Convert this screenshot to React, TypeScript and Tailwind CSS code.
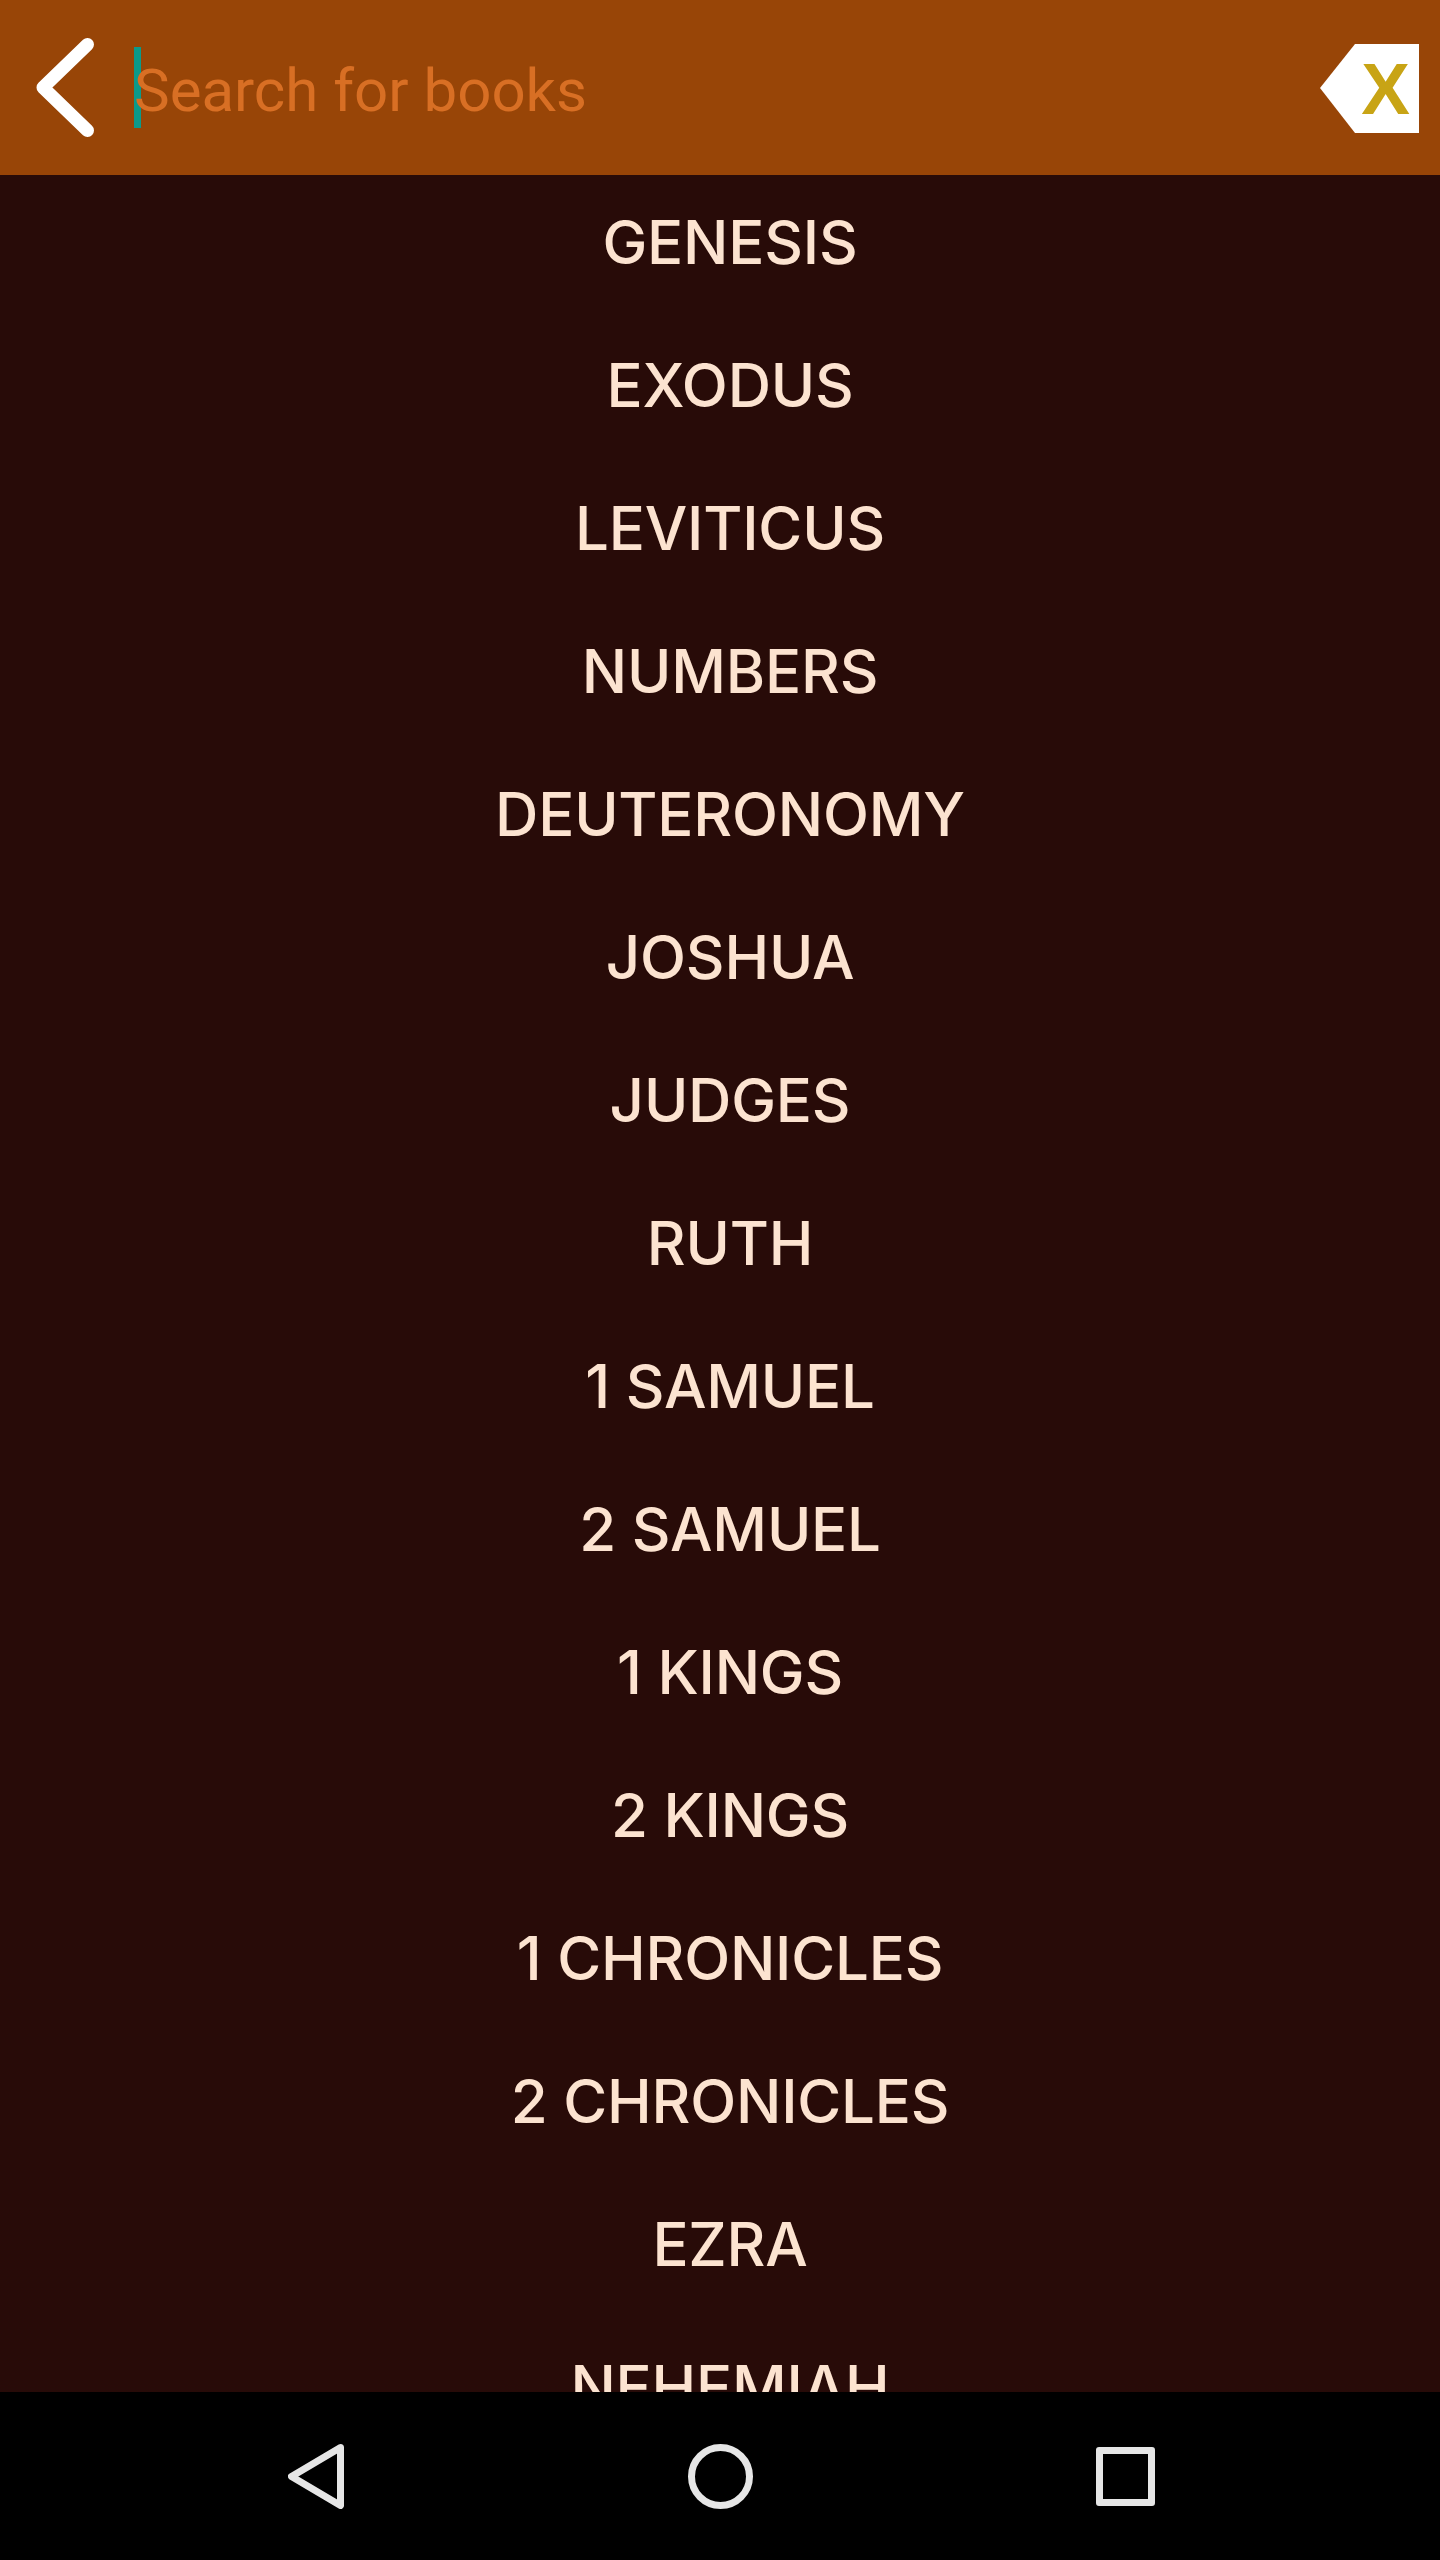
const books = ['GENESIS', 'EXODUS', 'LEVITICUS', 'NUMBERS', 'DEUTERONOMY', 'JOSHUA', 'JUDGES', 'RUTH', '1 SAMUEL', '2 SAMUEL', '1 KINGS', '2 KINGS', '1 CHRONICLES', '2 CHRONICLES', 'EZRA', 'NEHEMIAH'];

export default function App() {
  return (
    <div className="w-[1440px] h-[2560px] flex flex-col overflow-hidden bg-[#280b08]">
      {/* Search bar */}
      <div className="h-[175px] shrink-0 flex items-center bg-[#984507]">
        <svg className="ml-[36px] w-[58px] h-[99px] shrink-0" viewBox="0 0 58 99">
          <path d="M51.5 6.5 L7 49.5 L51.5 92.5" fill="none" stroke="#fff" strokeWidth="13" strokeLinecap="round" strokeLinejoin="round" />
        </svg>
        <div className="ml-[40px] w-[7px] h-[81px] bg-[#0b9a8a] shrink-0" />
        <span className="-ml-[7px] mt-[7px] text-[60px] leading-none text-[#d86f24] font-['Roboto',sans-serif]">Search for books</span>
        <div className="ml-auto mr-[21px] mt-[2px] relative w-[99px] h-[89px] flex items-center justify-end">
          <svg className="absolute inset-0 w-full h-full" viewBox="0 0 99 89">
            <polygon points="0,44 35,0 99,0 99,89 35,89" fill="#fff" />
          </svg>
          <span className="relative mr-[9px] text-[73px] leading-none font-bold text-[#c8a415] font-['Liberation_Sans',sans-serif]">X</span>
        </div>
      </div>
      {/* Book list */}
      <div className="flex-1 min-h-0 overflow-hidden pl-[20px]">
        {books.map((b) => (
          <div key={b} className="h-[143px] pb-[9px] flex items-center justify-center text-[60px] leading-none font-medium tracking-[-0.2px] text-[#fce3d0] font-['Inter',sans-serif]">
            {b}
          </div>
        ))}
      </div>
      {/* Android nav bar */}
      <div className="h-[168px] shrink-0 bg-black flex items-center">
        <svg className="ml-[288px] w-[56px] h-[65px]" viewBox="0 0 56 65">
          <path d="M52.5 3.5 L3.5 32.5 L52.5 61.5 Z" fill="none" stroke="#e6e6e6" strokeWidth="7" strokeLinejoin="round" />
        </svg>
        <div className="ml-[344px] w-[65px] h-[65px] rounded-full border-[7px] border-[#e6e6e6]" />
        <div className="ml-[343px] w-[59px] h-[59px] rounded-[3px] border-[7px] border-[#e6e6e6]" />
      </div>
    </div>
  );
}
